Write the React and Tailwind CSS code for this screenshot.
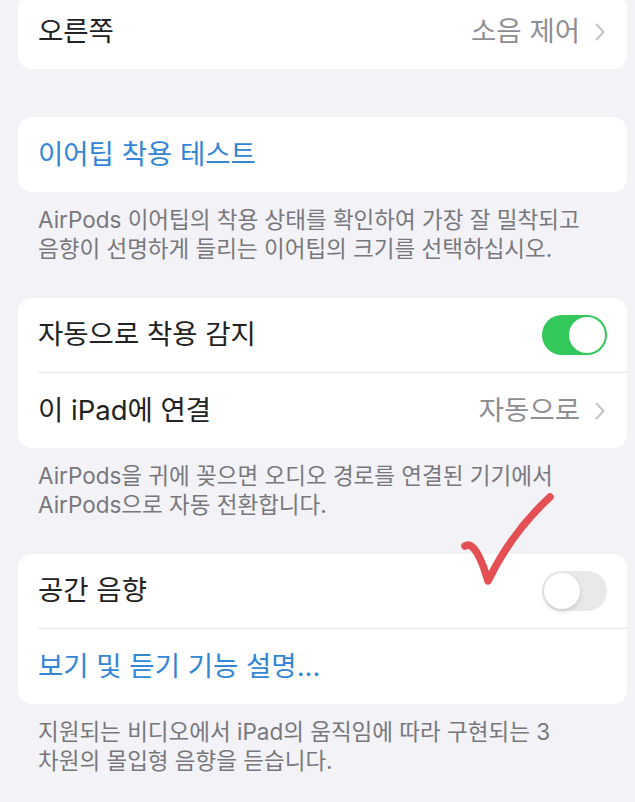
const font = { fontFamily: '"Inter", "Noto Sans CJK KR", sans-serif' };

function Chevron() {
  return (
    <svg width="12" height="20" viewBox="0 0 12 20" fill="none" className="ml-[14px] mr-[1px]">
      <path d="M2.5 2.5l7 7.5-7 7.5" stroke="#c4c4c8" strokeWidth="2" strokeLinecap="round" strokeLinejoin="round" />
    </svg>
  );
}

function Toggle({ on }) {
  if (on) {
    return (
      <div className="w-[65px] h-[40px] rounded-full bg-[#34c759] flex items-center justify-end p-[2px]">
        <div className="w-[36px] h-[36px] rounded-full bg-white" />
      </div>
    );
  }
  return (
    <div className="w-[65px] h-[40px] rounded-full bg-[#e9e9eb] flex items-center justify-start p-[2px]">
      <div className="w-[36px] h-[36px] rounded-full bg-white shadow-[0_2px_5px_rgba(0,0,0,0.15)]" />
    </div>
  );
}

function Row({ label, value, toggle, blue, divider }) {
  return (
    <div className="h-[75px] flex items-center pl-[20px]">
      <div className={`flex-1 flex items-center h-full pr-[20px] ${divider ? 'border-b border-[#e3e3e6]' : ''}`}>
        <span className={`flex-1 text-[27.5px] ${blue ? 'text-[#3385d6]' : 'text-[#222]'}`}>{label}</span>
        {value && (
          <span className="flex items-center text-[27.5px] text-[#8e8e93]">
            {value}
            <Chevron />
          </span>
        )}
        {toggle !== undefined && <Toggle on={toggle} />}
      </div>
    </div>
  );
}

function Footer({ children }) {
  return (
    <p className="px-[20px] pt-[13px] pb-[35px] text-[22.5px] leading-[29px] text-[#78787c] whitespace-nowrap">{children}</p>
  );
}

export default function App() {
  return (
    <div className="w-[635px] h-[802px] overflow-hidden bg-[#f2f2f7] relative" style={font}>
      <div className="pl-[18px] pr-[8px]">
        <div className="bg-white rounded-[14px] mt-[-6px]">
          <Row label="오른쪽" value="소음 제어" />
        </div>

        <div className="bg-white rounded-[14px] mt-[48px]">
          <Row label="이어팁 착용 테스트" blue />
        </div>
        <Footer>
          AirPods 이어팁의 착용 상태를 확인하여 가장 잘 밀착되고
          <br />
          음향이 선명하게 들리는 이어팁의 크기를 선택하십시오.
        </Footer>

        <div className="bg-white rounded-[14px]">
          <Row label="자동으로 착용 감지" toggle={true} divider />
          <Row label="이 iPad에 연결" value="자동으로" />
        </div>
        <Footer>
          AirPods을 귀에 꽂으면 오디오 경로를 연결된 기기에서
          <br />
          AirPods으로 자동 전환합니다.
        </Footer>

        <div className="bg-white rounded-[14px]">
          <Row label="공간 음향" toggle={false} divider />
          <Row label="보기 및 듣기 기능 설명..." blue />
        </div>
        <Footer>
          지원되는 비디오에서 iPad의 움직임에 따라 구현되는 3
          <br />
          차원의 몰입형 음향을 듣습니다.
        </Footer>
      </div>

      <svg className="absolute left-0 top-0 pointer-events-none" width="635" height="802" viewBox="0 0 635 802">
        <path
          d="M465 546 C473 541 481 557 488 581 C504 548 525 520 550 497"
          stroke="#e34f52"
          strokeWidth="7.5"
          fill="none"
          strokeLinecap="round"
          strokeLinejoin="round"
        />
      </svg>
    </div>
  );
}
